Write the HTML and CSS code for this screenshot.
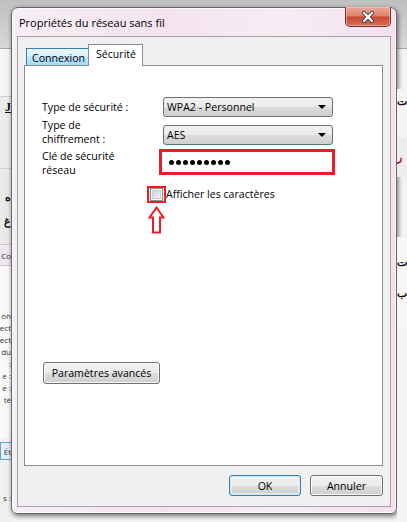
FILE: index.html
```html
<!DOCTYPE html>
<html lang="fr">
<head>
<meta charset="utf-8">
<title>Propriétés du réseau sans fil</title>
<link rel="stylesheet" href="styles.css">
</head>
<body>
<div class="desktop">
  <div class="strip strip-left">
    <div class="bg-top"></div>
    <div class="bg-band1"></div>
    <div class="bg-band2"><span class="frag frag-u">J</span></div>
    <div class="bg-white1"><span class="frag">ﻩ</span><span class="frag">ﻍ</span></div>
    <div class="bg-tab"><span class="frag small">Co</span></div>
    <div class="bg-list">
      <span class="frag small">on</span>
      <span class="frag small">ect</span>
      <span class="frag small">ect</span>
      <span class="frag small">du</span>
      <span class="frag small">:</span>
      <span class="frag small">e :</span>
      <span class="frag small">e :</span>
      <span class="frag small">té</span>
    </div>
    <div class="bg-btn"><span class="frag small">Ét</span></div>
    <div class="bg-rest"><span class="frag small lower">s :</span></div>
  </div>

  <div class="window">
    <div class="titlebar">
      <div class="title">Propriétés du réseau sans fil</div>
      <div class="close">
        <svg width="18" height="12" viewBox="0 0 18 12">
          <path d="M5 2 L13 10 M13 2 L5 10" stroke="#4a3a3a" stroke-width="4.2" stroke-linecap="round"/>
          <path d="M5 2 L13 10 M13 2 L5 10" stroke="#ffffff" stroke-width="2.4" stroke-linecap="round"/>
        </svg>
      </div>
    </div>
    <div class="client">
      <div class="tabs">
        <div class="tab tab-hover">Connexion</div>
        <div class="tab tab-active">Sécurité</div>
      </div>
      <div class="panel">
        <div class="form">
          <div class="row row1">
            <div class="label">Type de sécurité :</div>
            <div class="combo"><span>WPA2 - Personnel</span><span class="caret"></span></div>
          </div>
          <div class="row row2">
            <div class="label">Type de<br>chiffrement :</div>
            <div class="combo combo2"><span>AES</span><span class="caret"></span></div>
          </div>
          <div class="row row3">
            <div class="label">Clé de sécurité<br>réseau</div>
            <div class="keybox">
              <span class="dot"></span><span class="dot"></span><span class="dot"></span>
              <span class="dot"></span><span class="dot"></span><span class="dot"></span>
              <span class="dot"></span><span class="dot"></span><span class="dot"></span>
            </div>
          </div>
          <div class="checkrow">
            <div class="redsq"><span class="checkbox"></span></div>
            <span class="checklabel">Afficher les caractères</span>
          </div>
          <div class="arrow">
            <svg width="17" height="28" viewBox="0 0 17 28">
              <path d="M8.5 1.5 L1.5 11.5 L5 11.5 L5 26.5 L12 26.5 L12 11.5 L15.5 11.5 Z" fill="#ffffff" stroke="#ed1c24" stroke-width="2" stroke-linejoin="miter"/>
            </svg>
          </div>
        </div>
        <div class="btn btn-adv">Paramètres avancés</div>
      </div>
      <div class="actions">
        <div class="btn btn-ok">OK</div>
        <div class="btn btn-cancel">Annuler</div>
      </div>
    </div>
  </div>

  <div class="strip strip-right">
    <div class="bg-top"></div>
    <div class="r-a"><span class="frag">ﺕ</span></div>
    <div class="r-b"><span class="frag red">ﺭ</span></div>
    <div class="r-c"><span class="frag">ﺕ</span></div>
    <div class="r-d"><span class="frag">ﺏ</span></div>
    <div class="r-rest"></div>
  </div>
</div>
</body>
</html>
```

FILE: styles.css
```css
* { box-sizing: border-box; }
html, body { margin: 0; padding: 0; }
body {
  width: 407px;
  height: 522px;
  overflow: hidden;
  font-family: "Open Sans", "Noto Sans", sans-serif;
  font-size: 10.6px;
  color: #000;
  background: #f2f2f2;
}
.desktop {
  display: flex;
  width: 407px;
  height: 522px;
  background: linear-gradient(to bottom, #bfbfbf 0, #d9d9d9 48px, #a5a5a5 48px, #a5a5a5 49px, #f3f3f3 49px);
}

/* background strips */
.strip { display: flex; flex-direction: column; overflow: hidden; }
.strip-left { width: 11px; }
.strip-right { width: 10px; }
.bg-top { height: 49px; flex: none; }
.bg-band1 { height: 48px; background: #f4f4f4; border-bottom: 1px solid #d0d0d0; flex: none; }
.bg-band2 { height: 72px; background: #ececec; border-bottom: 1px solid #cfcfcf; display: flex; justify-content: flex-end; align-items: flex-start; padding-top: 4px; flex: none; }
.bg-white1 { height: 75px; background: #e9e9e9; display: flex; flex-direction: column; align-items: flex-end; gap: 12px; padding-top: 22px; flex: none; }
.bg-tab { height: 22px; background: #efe6ee; border-top: 1px solid #c9c9c9; border-bottom: 1px solid #c9c9c9; display: flex; justify-content: flex-end; align-items: center; flex: none; }
.bg-list { height: 172px; background: #fafafa; display: flex; flex-direction: column; align-items: flex-end; gap: 1px; padding-top: 44px; flex: none; }
.bg-btn { height: 18px; background: #e4eef6; border: 1px solid #5fa4cf; border-right: none; display: flex; justify-content: flex-end; align-items: center; flex: none; margin-top: 4px; }
.bg-rest { flex: 1; background: #f0f0f0; display: flex; flex-direction: column; align-items: flex-end; padding-top: 32px; }
.frag { white-space: nowrap; font-size: 11px; line-height: 12px; font-weight: bold; color: #111; }
.frag.small { font-size: 8px; line-height: 11px; font-weight: normal; color: #333; }
.frag-u { text-decoration: underline; font-family: "Liberation Serif", serif; font-size: 12px; }
.frag.red { color: #a01818; }
.r-a { height: 48px; margin-top: 40px; background: #f4f4f4; display: flex; padding-top: 6px; flex: none; }
.r-b { height: 40px; background: #ededed; display: flex; align-items: center; flex: none; }
.r-c { height: 50px; margin-top: 60px; background: #f7f7f7; display: flex; align-items: center; flex: none; }
.r-d { height: 40px; background: #f7f7f7; display: flex; align-items: flex-start; flex: none; }
.r-rest { flex: 1; background: #f5f5f5; }

/* window */
.window {
  margin-top: 7px;
  width: 386px;
  height: 507px;
  flex: none;
  border: 1px solid #6c6470;
  border-radius: 7px 7px 6px 6px;
  background: linear-gradient(to right, #f7eef5 0, #f4e3ef 40%, #f7ecf4 70%, #f3e1ee 100%);
  box-shadow: 1px 2px 5px rgba(0,0,0,0.55), inset 0 0 0 1px rgba(255,255,255,0.7);
  display: flex;
  flex-direction: column;
}
.titlebar {
  height: 28px;
  display: flex;
  justify-content: space-between;
  align-items: flex-start;
  flex: none;
}
.title {
  padding-left: 7px;
  padding-top: 7px;
  font-size: 11px;
  line-height: 16px;
  color: #000;
}
.close {
  margin-top: -1px;
  margin-right: 5px;
  width: 46px;
  height: 20px;
  border: 1px solid #6e3327;
  border-top: none;
  border-radius: 0 0 5px 5px;
  background: linear-gradient(to bottom, #e9a99a 0, #dd8570 45%, #c84a30 55%, #d2705a 100%);
  box-shadow: inset 0 0 0 1px rgba(255,210,200,0.5);
  display: flex;
  align-items: center;
  justify-content: center;
}
.client {
  margin: 0 5px;
  width: 374px;
  height: 471px;
  border: 1px solid #a7a1a8;
  background: #f0f0f0;
  display: flex;
  flex-direction: column;
}
.tabs {
  margin-top: 7px;
  margin-left: 8px;
  height: 21px;
  display: flex;
  align-items: flex-end;
  position: relative;
  z-index: 2;
}
.tab {
  font-size: 10.6px;
  line-height: 14px;
}
.tab-hover {
  width: 62px;
  height: 17px;
  border: 1px solid #3c7fb1;
  border-bottom: none;
  border-right: none;
  background: linear-gradient(to bottom, #eaf6fd 0, #d9f0fc 45%, #bee6fd 50%, #a7d9f5 100%);
  padding: 2px 0 0 5px;
}
.tab-active {
  width: 55px;
  height: 22px;
  margin-bottom: -1px;
  border: 1px solid #898c95;
  border-bottom: none;
  background: #ffffff;
  padding: 2px 0 0 7px;
}
.panel {
  margin-left: 6px;
  width: 359px;
  height: 401px;
  border: 1px solid #898c95;
  background: #ffffff;
  flex: none;
}
.form {
  margin-top: 31px;
  margin-left: 17px;
}
.row {
  display: flex;
  align-items: flex-start;
}
.label {
  width: 121px;
  flex: none;
  font-size: 10.6px;
  line-height: 14px;
}
.row1 { height: 20px; align-items: center; }
.row2 { margin-top: 1px; height: 28px; }
.row3 { margin-top: 3px; height: 26px; }
.combo {
  width: 170px;
  height: 20px;
  border: 1px solid #707070;
  border-radius: 3px;
  background: linear-gradient(to bottom, #f2f2f2 0, #ebebeb 50%, #dddddd 50%, #cfcfcf 100%);
  display: flex;
  align-items: center;
  justify-content: space-between;
  padding: 0 6px 0 3px;
  font-size: 10.6px;
}
.combo2 { margin-top: 7px; }
.caret {
  width: 0;
  height: 0;
  border-left: 4px solid transparent;
  border-right: 4px solid transparent;
  border-top: 4px solid #000;
}
.keybox {
  margin-left: -4px;
  width: 176px;
  height: 26px;
  border: 3px solid #ed1c24;
  background: #fff;
  display: flex;
  align-items: center;
  gap: 2px;
  padding-left: 7px;
}
.dot {
  width: 5px;
  height: 5px;
  border-radius: 50%;
  background: #000;
}
.checkrow {
  margin-top: 11px;
  margin-left: 105px;
  display: flex;
  align-items: center;
  height: 16px;
}
.redsq {
  width: 19px;
  height: 17px;
  border: 2px solid #ed1c24;
  display: flex;
  align-items: center;
  justify-content: center;
}
.checkbox {
  width: 13px;
  height: 13px;
  border: 1px solid #8e8f8f;
  background: linear-gradient(135deg, #cbcfd5 0, #f6f6f6 100%);
  box-shadow: inset 0 0 0 1px #f4f4f4, inset 0 0 0 2px #c9cdd2;
}
.checklabel {
  font-size: 10.6px;
  line-height: 14px;
}
.arrow {
  margin-top: 4px;
  margin-left: 106px;
  height: 28px;
}
.arrow svg { display: block; }
.btn {
  height: 22px;
  border: 1px solid #707070;
  border-radius: 3px;
  background: linear-gradient(to bottom, #f2f2f2 0, #ebebeb 50%, #dddddd 50%, #cfcfcf 100%);
  box-shadow: inset 0 0 0 1px rgba(255,255,255,0.8);
  display: flex;
  align-items: center;
  justify-content: center;
  font-size: 10.6px;
}
.btn-adv {
  margin-top: 128px;
  margin-left: 18px;
  width: 117px;
}
.actions {
  margin-top: 9px;
  margin-right: 7px;
  display: flex;
  justify-content: flex-end;
  gap: 9px;
}
.btn-ok {
  width: 72px;
  height: 21px;
  border-color: #3c7fb1;
  box-shadow: inset 0 0 0 1px #c5e6f7, inset 0 0 0 2px rgba(255,255,255,0.5);
}
.btn-cancel {
  width: 73px;
  height: 21px;
}
```
